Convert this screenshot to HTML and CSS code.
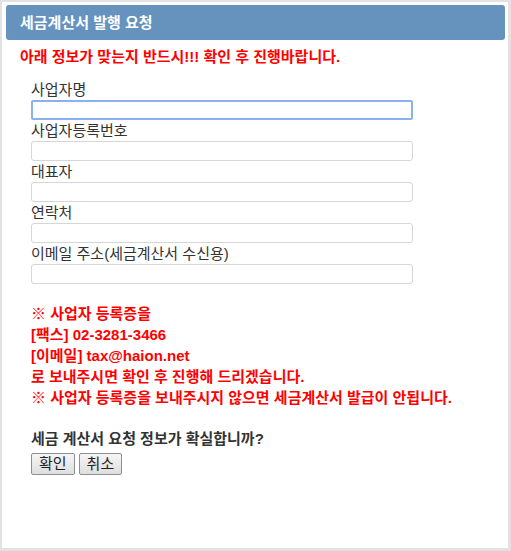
FILE: index.html
```html
<!DOCTYPE html>
<html lang="ko">
<head>
    <meta charset="UTF-8">
    <title>세금계산서 발행 요청</title>
    <link rel="stylesheet" href="styles.css">
</head>
<body>

<div class="dialog">
    <div class="dialog-title">세금계산서 발행 요청</div>
    <div class="dialog-content">
        <p class="warning">아래 정보가 맞는지 반드시!!! 확인 후 진행바랍니다.</p>
        <div class="form">
            <label for="bizName">사업자명</label>
            <input type="text" id="bizName" class="focused">
            <label for="bizNo">사업자등록번호</label>
            <input type="text" id="bizNo">
            <label for="ceo">대표자</label>
            <input type="text" id="ceo">
            <label for="phone">연락처</label>
            <input type="text" id="phone">
            <label for="email">이메일 주소(세금계산서 수신용)</label>
            <input type="text" id="email">

            <div class="notice">
                ※ 사업자 등록증을<br>
                [팩스] 02-3281-3466<br>
                [이메일] tax@haion.net<br>
                로 보내주시면 확인 후 진행해 드리겠습니다.<br>
                ※ 사업자 등록증을 보내주시지 않으면 세금계산서 발급이 안됩니다.
            </div>

            <div class="confirm">세금 계산서 요청 정보가 확실합니까?</div>
            <div class="buttons">
                <button type="button">확인</button>
                <button type="button">취소</button>
            </div>
        </div>
    </div>
</div>

</body>
</html>
```

FILE: styles.css
```css
html, body {
    height: 100%;
}
body {
    margin: 0;
    background-color: #e2e2e2;
    font-family: "Liberation Sans", "Noto Sans CJK KR", sans-serif;
    color: #333;
}
.dialog {
    box-sizing: border-box;
    width: 506px;
    height: 546px;
    margin: 2px 0 0 2px;
    padding: 3px 3px 0 4px;
    background-color: #fff;
}
.dialog-title {
    height: 35px;
    line-height: 35px;
    padding-left: 14px;
    background-color: #6593be;
    border-radius: 3px;
    color: #fff;
    font-size: 15px;
    font-weight: bold;
}
.dialog-content {
    padding: 0 0 0 14px;
}
.warning {
    margin: 7px 0 13px;
    color: #f00;
    font-size: 15px;
    font-weight: bold;
    line-height: 20px;
}
.form {
    padding-left: 11px;
}
.form label {
    display: block;
    font-size: 15px;
    line-height: 20px;
    margin-bottom: 0;
}
.form input {
    display: block;
    box-sizing: border-box;
    width: 382px;
    height: 20px;
    margin: 0 0 1px;
    border: 1px solid #d6d6d6;
    border-radius: 3px;
    padding: 0 2px;
}
.form input.focused {
    border: 2px solid #8ab0f0;
    border-radius: 2px;
}
.notice {
    margin-top: 19px;
    color: #f00;
    font-size: 15px;
    font-weight: bold;
    line-height: 21px;
}
.confirm {
    margin-top: 21px;
    font-size: 15px;
    font-weight: bold;
    line-height: 20px;
}
.buttons {
    display: flex;
    gap: 4px;
    margin-top: 4px;
}
.buttons button {
    height: 22px;
    padding: 0 7px;
    font-family: "Liberation Sans", "Noto Sans CJK KR", sans-serif;
    font-size: 15px;
    line-height: 20px;
    color: #222;
    background: linear-gradient(#f6f6f6, #dedede);
    border: 1px solid #8f8f8f;
    border-radius: 2px;
}
```
